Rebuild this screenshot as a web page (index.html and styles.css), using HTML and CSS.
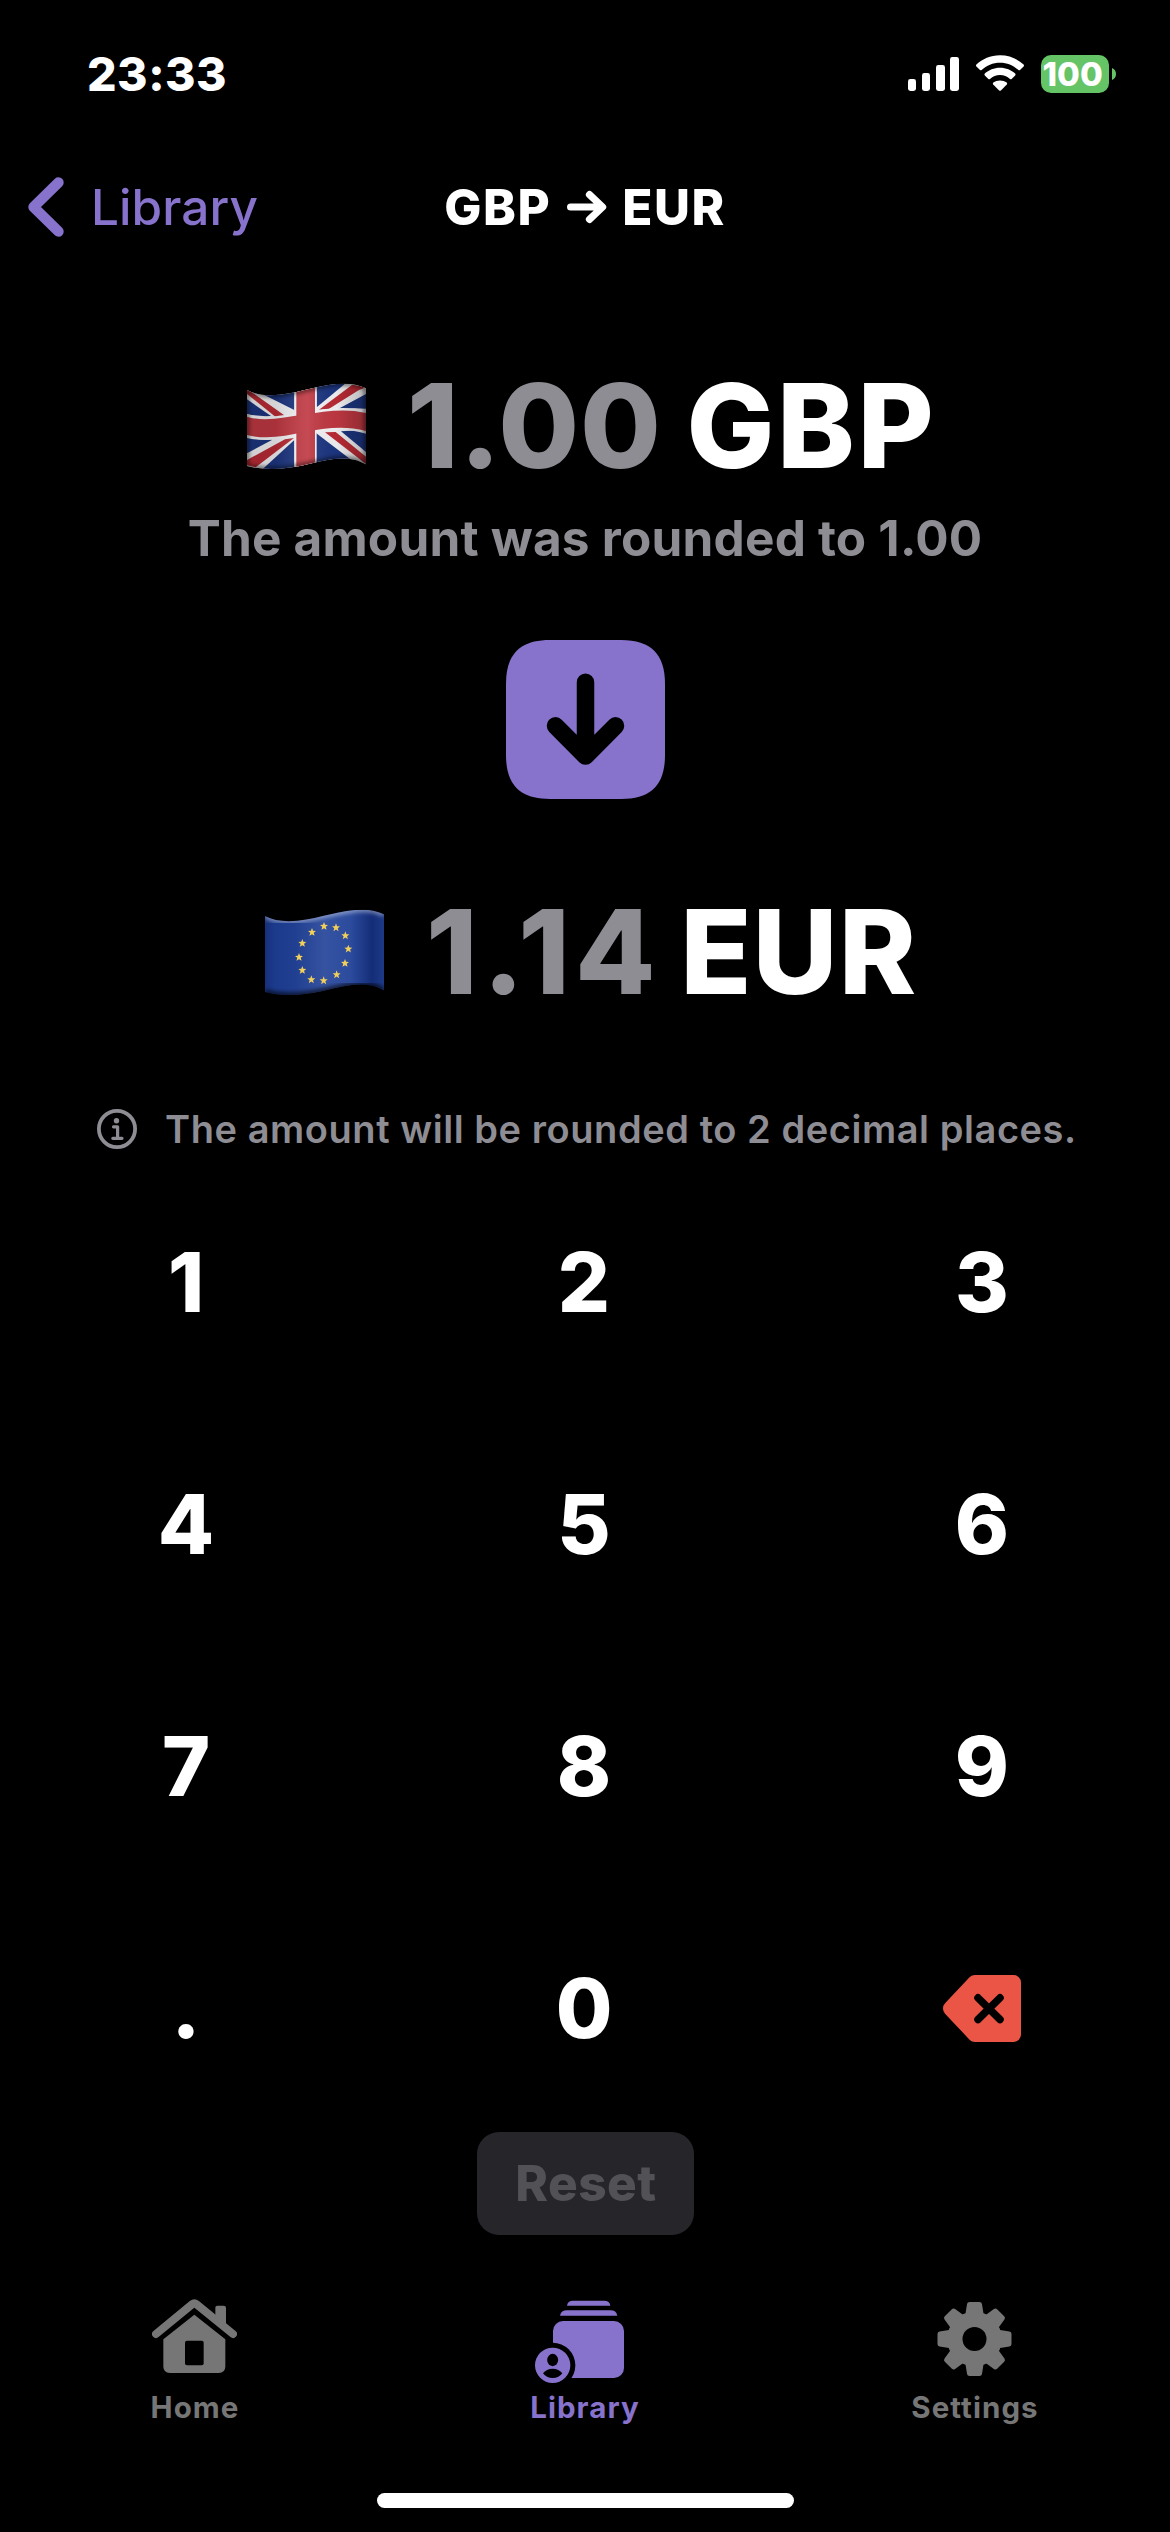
FILE: index.html
```
<!DOCTYPE html>
<html lang="en">
<head>
<meta charset="utf-8">
<meta name="viewport" content="width=device-width, initial-scale=1">
<title>GBP → EUR</title>
<link rel="stylesheet" href="styles.css">
</head>
<body>
<div class="screen">
  <header class="status">
    <span class="status-time">23:33</span>
    <div class="status-icons">
      <svg class="signal" width="51" height="34" viewBox="0 0 51 34" fill="#fff">
        <rect x="0" y="22" width="8" height="12" rx="2.4"/>
        <rect x="14" y="16" width="8" height="18" rx="2.4"/>
        <rect x="28" y="8" width="9" height="26" rx="2.4"/>
        <rect x="42" y="0" width="9" height="34" rx="2.4"/>
      </svg>
      <svg class="wifi" width="50" height="37" viewBox="0 0 50 37" fill="#fff">
        <path d="M25 .3C34.6 .3 42.6 4 48.6 9.6Q49.4 10.5 48.6 11.4L45 15Q44.2 15.7 43.4 15C38.4 10.4 32.2 7.7 25 7.7S11.6 10.4 6.6 15Q5.8 15.7 5 15L1.4 11.4Q.6 10.5 1.4 9.6C7.4 4 15.4 .3 25 .3Z"/>
        <path d="M25 12.7C31 12.7 36.3 15 40.2 18.6Q41 19.5 40.2 20.4L36.6 23.9Q35.8 24.6 35 23.9C32.2 21.5 28.8 20.1 25 20.1S17.8 21.5 15 23.9Q14.2 24.6 13.4 23.9L9.8 20.4Q9 19.5 9.8 18.6C13.7 15 19 12.7 25 12.7Z"/>
        <path d="M25 25.4C27.5 25.4 29.9 26.2 31.7 27.6Q32.6 28.5 31.8 29.4L25.9 35.4Q25 36.2 24.1 35.4L18.2 29.4Q17.4 28.5 18.3 27.6C20.1 26.2 22.5 25.4 25 25.4Z"/>
      </svg>
      <div class="battery"><span>100</span></div>
      <svg class="battery-nub" width="4" height="12" viewBox="0 0 4 12"><path d="M0 0C2.5 1 4 3.3 4 6S2.5 11 0 12Z" fill="#65c466"/></svg>
    </div>
  </header>

  <nav class="nav">
    <a class="back">
      <svg width="38" height="62" viewBox="0 0 38 62" fill="none" stroke="#8772cc" stroke-width="10.4" stroke-linecap="round" stroke-linejoin="round"><path d="M31.5 6.5L6.5 31L31.5 55.5"/></svg>
      <span>Library</span>
    </a>
    <h1 class="title">
      <span>GBP</span>
      <svg width="40" height="34" viewBox="0 0 40 34" fill="none" stroke="#fff" stroke-width="7.2" stroke-linecap="round" stroke-linejoin="round"><path d="M3.6 17H35M22.5 4.6L35.6 17L22.5 29.4"/></svg>
      <span>EUR</span>
    </h1>
  </nav>

  <main class="converter">
    <section class="amount amount-from">
      <svg class="flag" width="145" height="110" viewBox="0 0 435 330">
        <defs>
          <clipPath id="gb"><path d="M36 60C62 74 96 78 134 74C205 66 262 41 330 41Q366 41 393 55V283C362 265 330 263 296 267C232 276 180 297 110 297Q68 297 36 288Z"/></clipPath>
          <linearGradient id="shade" x1="0" x2="1" y1="0" y2="0">
            <stop offset="0" stop-color="#000" stop-opacity=".32"/><stop offset=".06" stop-color="#000" stop-opacity=".14"/>
            <stop offset=".28" stop-color="#000" stop-opacity=".12"/><stop offset=".5" stop-color="#fff" stop-opacity=".09"/>
            <stop offset=".7" stop-color="#000" stop-opacity=".03"/><stop offset=".9" stop-color="#000" stop-opacity=".24"/><stop offset="1" stop-color="#000" stop-opacity=".18"/>
          </linearGradient>
          <filter id="soft"><feGaussianBlur stdDeviation="6"/></filter>
        </defs>
        <g clip-path="url(#gb)">
          <rect width="435" height="330" fill="#f1f1f3"/>
          <g fill="#1c3580">
            <path d="M70 66L178 60V120Z"/><path d="M36 88L108 138Q70 140 36 132Z"/>
            <path d="M245 40H332L245 112Z"/><path d="M393 72V116Q350 113 308 118Z"/>
            <path d="M36 204Q70 212 112 209L36 250Z"/><path d="M178 210V300H80Z"/>
            <path d="M242 188V292L352 272Z"/><path d="M318 184Q356 180 393 187V246Z"/>
          </g>
          <g fill="#b92b35">
            <path d="M36 58L58 72L150 137L122 141L36 72Z"/>
            <path d="M393 52L372 60L281 117L252 119L352 44Z"/>
            <path d="M36 286V270L150 208L177 204L62 292Z"/>
            <path d="M270 187L302 186L393 260V282Z"/>
          </g>
          <path d="M36 132C90 150 150 134 205 127C270 117 330 107 393 122V191C330 173 270 180 205 194C150 206 90 216 36 202Z" fill="#f4f4f6"/>
          <path d="M178 40H245V310H178Z" fill="#f4f4f6"/>
          <path d="M184 40H240V310H184Z" fill="#bf3842"/>
          <path d="M36 140C90 157 150 141 205 134C270 124 330 114 393 129V183C330 166 270 174 205 187C150 199 90 209 36 195Z" fill="#bf3842"/>
          <rect width="435" height="330" fill="url(#shade)"/>
          <path d="M36 60C62 74 96 78 134 74C205 66 262 41 330 41Q366 41 393 55V283C362 265 330 263 296 267C232 276 180 297 110 297Q68 297 36 288Z" fill="none" stroke="#000" stroke-opacity=".65" stroke-width="10" filter="url(#soft)"/>
        </g>
      </svg>
      <span class="value value-gbp">1.00</span><span class="code code-gbp">GBP</span>
    </section>
    <p class="note">The amount was rounded to 1.00</p>

    <button class="swap" aria-label="Convert">
      <svg width="159" height="159" viewBox="0 0 159 159">
        <path d="M44 0H115C145 0 159 14 159 44V115C159 145 145 159 115 159H44C14 159 0 145 0 115V44C0 14 14 0 44 0Z" fill="#8772cc"/>
        <path d="M79.5 42.3V112M49.5 85.8L79.5 116L109.5 85.8" fill="none" stroke="#000" stroke-width="17.5" stroke-linecap="round" stroke-linejoin="round"/>
      </svg>
    </button>

    <section class="amount amount-to">
      <svg class="flag" width="145" height="110" viewBox="0 0 435 330">
        <defs>
          <clipPath id="eu"><path d="M36 60C62 74 96 78 134 74C205 66 262 41 330 41Q366 41 393 55V283C362 265 330 263 296 267C232 276 180 297 110 297Q68 297 36 288Z"/></clipPath>
          <linearGradient id="blue" x1="36" x2="393" y1="0" y2="0" gradientUnits="userSpaceOnUse">
            <stop offset="0" stop-color="#16307a"/><stop offset=".08" stop-color="#1c3a8c"/><stop offset=".25" stop-color="#213f90"/>
            <stop offset=".5" stop-color="#3653a2"/><stop offset=".72" stop-color="#2c4b9d"/><stop offset=".9" stop-color="#142d78"/><stop offset="1" stop-color="#1e3a86"/>
          </linearGradient>
          <path id="star" d="M0-13L3.2-4.5L12-4L5.2 1.5L7.6 10.5L0 5.5L-7.6 10.5L-5.2 1.5L-12-4L-3.2-4.5Z"/>
        </defs>
        <g clip-path="url(#eu)">
          <rect width="435" height="330" fill="url(#blue)"/>
          <path d="M36 60C62 74 96 78 134 74C205 66 262 41 330 41Q366 41 393 55" fill="none" stroke="#fff" stroke-opacity=".5" stroke-width="12" filter="url(#soft)"/>
          <path d="M393 283C362 265 330 263 296 267C232 276 180 297 110 297Q68 297 36 288" fill="none" stroke="#000" stroke-opacity=".75" stroke-width="14" filter="url(#soft)"/>
          <g fill="#f1cf5b">
            <use href="#star" x="213" y="91"/><use href="#star" x="249" y="95"/><use href="#star" x="277" y="119"/><use href="#star" x="286" y="159"/>
            <use href="#star" x="276" y="202"/><use href="#star" x="251" y="236"/><use href="#star" x="212" y="254"/><use href="#star" x="175" y="251"/>
            <use href="#star" x="148" y="223"/><use href="#star" x="138" y="184"/><use href="#star" x="148" y="142"/><use href="#star" x="177" y="109"/>
          </g>
        </g>
      </svg>
      <span class="value value-eur">1.14</span><span class="code code-eur">EUR</span>
    </section>

    <p class="info">
      <svg width="40" height="40" viewBox="0 0 40 40" fill="none" stroke="#8e8d93">
        <circle cx="20" cy="20" r="18.1" stroke-width="3.8"/>
        <circle cx="19.5" cy="11.8" r="2.7" fill="#8e8d93" stroke="none"/>
        <path d="M16.5 17.8H20.6V29M15.8 29.3H25" stroke-width="3.2" stroke-linecap="round" stroke-linejoin="round"/>
      </svg>
      <span>The amount will be rounded to 2 decimal places.</span>
    </p>

    <div class="keypad">
      <span>1</span><span>2</span><span>3</span>
      <span>4</span><span>5</span><span>6</span>
      <span>7</span><span>8</span><span>9</span>
      <span>.</span><span>0</span>
      <span><svg width="78" height="67" viewBox="0 0 78 67">
        <path d="M7.5 33.5L32 7.5H70.5V59.5H32Z" fill="#eb5545" stroke="#eb5545" stroke-width="15" stroke-linejoin="round"/>
        <path d="M35 22.8L57 44.5M57 22.8L35 44.5" stroke="#000" stroke-width="7.5" stroke-linecap="round"/>
      </svg></span>
    </div>

    <button class="reset" disabled>Reset</button>
  </main>

  <footer class="tabs">
    <a class="tab">
      <svg class="icon-home" width="85" height="74" viewBox="0 0 255 222">
        <path d="M127 47L220 121V202Q220 222 200 222H54Q34 222 34 202V121Z" fill="#767676"/>
        <path d="M12 105L120 14Q127 8 134 14L243 105" fill="none" stroke="#000" stroke-width="46"/>
        <path d="M190 66V26Q190 20 196 20H215Q222 20 222 26V90Z" fill="#767676"/>
        <path d="M12 105L121 15.5Q127 10.5 133 15.5L243 105" fill="none" stroke="#767676" stroke-width="24" stroke-linecap="round"/>
        <rect x="99" y="125" width="56" height="74" rx="6" fill="#000"/>
      </svg>
      <span>Home</span>
    </a>
    <a class="tab tab-active">
      <svg class="icon-library" width="90" height="83" viewBox="0 0 270 249">
        <g fill="#8772cc">
          <path d="M96 17Q98 2 114 2H208Q224 2 226 17Z"/>
          <path d="M75 47Q78 31 96 31H226Q244 31 247 47Z"/>
          <rect x="54" y="63" width="213" height="171" rx="30"/>
        </g>
        <circle cx="53" cy="196" r="68" fill="#000"/>
        <circle cx="53" cy="196" r="53" fill="#8772cc"/>
        <ellipse cx="53" cy="180" rx="16.5" ry="18.5" fill="#000"/>
        <path d="M24 220Q34 206 53 206T82 220Q72 234 53 234T24 220Z" fill="#000"/>
      </svg>
      <span>Library</span>
    </a>
    <a class="tab">
      <svg class="icon-settings" width="75" height="74" viewBox="-37.5 -37 75 74">
        <defs><path id="tooth" d="M-5-34.5H5L7-22H-7Z" stroke="#767676" stroke-width="5" stroke-linejoin="round"/></defs>
        <g fill="#767676">
          <circle r="27.3"/>
          <use href="#tooth"/><use href="#tooth" transform="rotate(45)"/><use href="#tooth" transform="rotate(90)"/><use href="#tooth" transform="rotate(135)"/>
          <use href="#tooth" transform="rotate(180)"/><use href="#tooth" transform="rotate(225)"/><use href="#tooth" transform="rotate(270)"/><use href="#tooth" transform="rotate(315)"/>
        </g>
        <circle r="12" fill="#000"/>
      </svg>
      <span>Settings</span>
    </a>
  </footer>
  <div class="home-indicator"></div>
</div>
</body>
</html>
```
FILE: styles.css
```
* { box-sizing: border-box; }
body { margin: 0; background: #000; color: #fff; font-family: Inter, "Liberation Sans", sans-serif; }
svg { display: block; flex: none; }
h1, p { margin: 0; font: inherit; }
button { border: 0; padding: 0; margin: 0; background: none; font: inherit; }

.screen { width: 1170px; height: 2532px; display: flex; flex-direction: column; overflow: hidden; }

.status { height: 148px; padding: 0 55px 0 87px; display: flex; align-items: center; justify-content: space-between; }
.status-time { font-size: 46.5px; font-weight: 800; letter-spacing: .47px; }
.status-icons { display: flex; align-items: center; }
.wifi { margin: -1px 16px 0 16px; }
.battery { width: 68px; height: 38px; border-radius: 10px; background: #65c466; font-size: 33px; font-weight: 800; line-height: 38px; padding-left: 1.5px; }
.battery-nub { margin-left: 3px; margin-right: -1px; }

.nav { height: 118px; display: grid; grid-template-columns: 1fr auto 1fr; align-items: center; font-size: 49.5px; }
.back { display: flex; align-items: center; gap: 26px; padding-left: 27px; color: #8772cc; font-weight: 500; }
.back span { letter-spacing: .08px; }
.title { display: flex; align-items: center; gap: 15.5px; font-weight: 800; letter-spacing: 1.5px; }

.converter { display: flex; flex-direction: column; align-items: center; }
.amount { width: 100%; height: 140px; display: flex; align-items: center; font-size: 117px; line-height: 140px; font-weight: 800; white-space: nowrap; }
.amount-from { margin-top: 90px; padding-left: 235px; }
.amount-to { margin-top: 83px; padding-left: 253px; }
.flag { margin-bottom: 2px; }
.value { color: #8e8d93; margin-left: 28px; }
.value-gbp { letter-spacing: .92px; margin-left: 27px; }
.code-gbp { letter-spacing: 2.61px; margin-left: 24.5px; }
.value-eur { letter-spacing: 5.07px; }
.code-eur { letter-spacing: 1.04px; margin-left: 19.5px; }
.note { margin-top: 12px; font-size: 49.5px; line-height: 60px; font-weight: 700; letter-spacing: .21px; color: #8e8d93; }
.swap { margin-top: 72px; width: 159px; height: 159px; }
.info { margin-top: 77px; width: 100%; height: 60px; padding-left: 97px; display: flex; align-items: center; gap: 28px; font-size: 38px; font-weight: 600; letter-spacing: .56px; color: #8e8d93; white-space: nowrap; }
.keypad { width: 100%; margin-top: 2px; padding-right: 2px; display: grid; grid-template-columns: repeat(3, 1fr); grid-auto-rows: 242px; column-gap: 26px; font-size: 82px; font-weight: 800; }
.keypad span { display: flex; align-items: center; justify-content: center; }
.reset { margin-top: 3px; width: 217px; height: 103px; padding-left: 2px; border-radius: 22px; background: #262529; color: #525156; font-size: 49.5px; line-height: 103px; font-weight: 800; letter-spacing: .48px; }

.tabs { margin-top: 61px; height: 127px; display: flex; }
.tab { flex: 1; display: flex; flex-direction: column; align-items: center; justify-content: space-between; color: #767676; font-size: 29.5px; line-height: 32px; font-weight: 700; letter-spacing: 1.05px; }
.tab .icon-home { margin: 3px 1px 0 0; }
.tab .icon-library { margin: 4px 10px 0 0; }
.tab .icon-settings { margin: 6px 2px 0 0; }
.tab-active { color: #8772cc; }
.home-indicator { width: 417px; height: 15px; margin: 70px auto 0; border-radius: 8px; background: #fff; }
```
